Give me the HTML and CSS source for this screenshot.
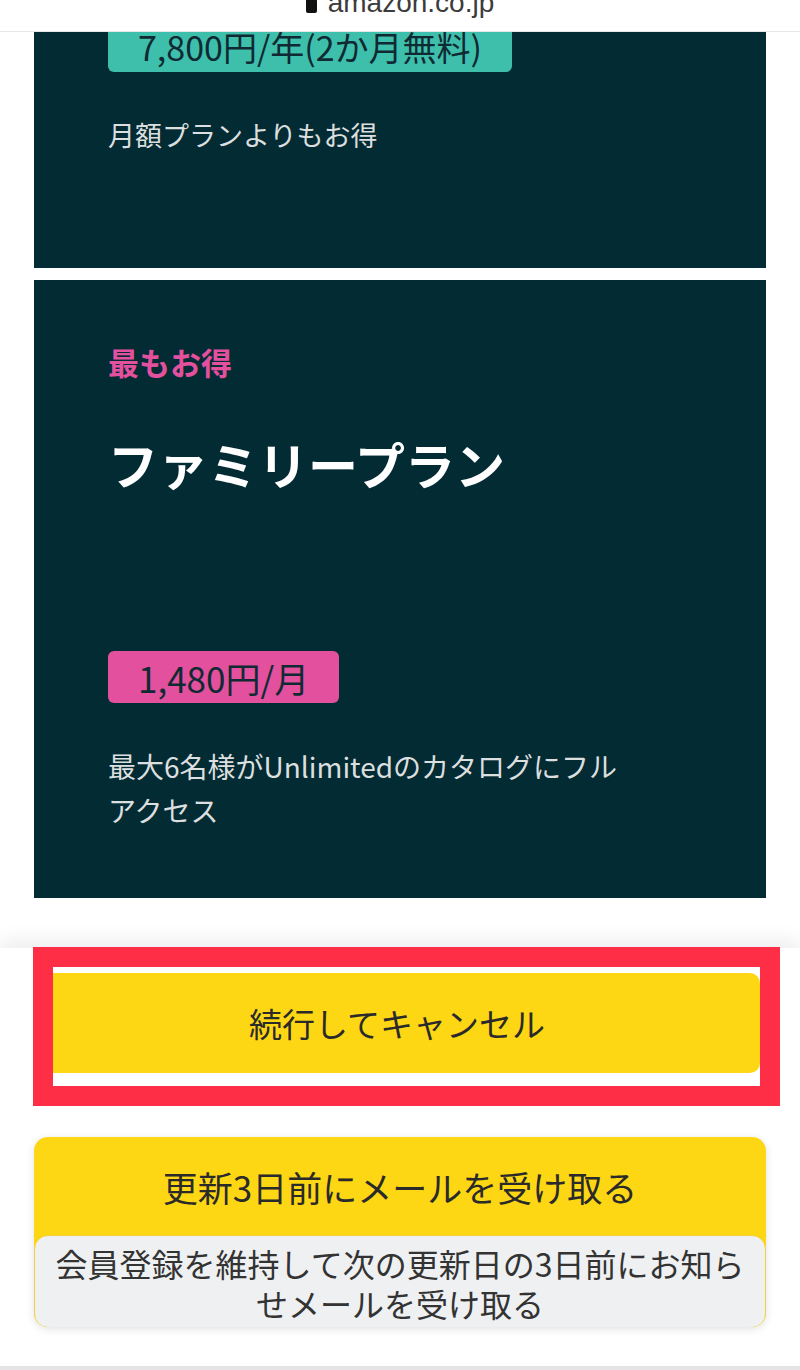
FILE: index.html
```html
<!DOCTYPE html>
<html>
<head>
    <title>Kindle Unlimited - プラン</title>
    <meta charset="UTF-8">
    <meta name="viewport" content="width=device-width, initial-scale=1.0">
    <link rel="stylesheet" href="styles.css">
</head>
<body>
    <header class="urlbar">
        <span class="url">
            <svg class="lock" width="11" height="14" viewBox="0 0 11 14"><rect x="0" y="0" width="11" height="14" rx="2" fill="#111"/></svg>
            amazon.co.jp
        </span>
    </header>

    <main class="plans">
        <section class="plan plan-annual">
            <span class="price price-teal">7,800円/年(2か月無料)</span>
            <p class="plan-note">月額プランよりもお得</p>
        </section>
        <section class="plan plan-family">
            <p class="plan-tag">最もお得</p>
            <h2 class="plan-name">ファミリープラン</h2>
            <span class="price price-pink">1,480円/月</span>
            <p class="plan-note plan-desc">最大6名様がUnlimitedのカタログにフルアクセス</p>
        </section>
    </main>

    <footer class="actions">
        <button class="btn-cancel">続行してキャンセル</button>
        <div class="highlight"></div>
        <button class="btn-remind">
            <span class="remind-title">更新3日前にメールを受け取る</span>
            <span class="remind-desc">会員登録を維持して次の更新日の3日前にお知らせメールを受け取る</span>
        </button>
    </footer>
</body>
</html>
```

FILE: styles.css
```css
body {
    margin: 0;
    background-color: white;
    font-family: "Noto Sans CJK JP", "Noto Sans", sans-serif;
    color: #222;
}
.urlbar {
    position: fixed;
    top: 0;
    left: 0;
    right: 0;
    height: 32px;
    background-color: white;
    border-bottom: 1px solid #e8e8e8;
    box-sizing: border-box;
    overflow: hidden;
    display: flex;
    justify-content: center;
    z-index: 10;
}
.url {
    display: flex;
    align-items: flex-start;
    gap: 11px;
    margin-top: -11px;
    font-family: "Liberation Sans", Arial, sans-serif;
    font-size: 28px;
    line-height: 28px;
    color: #3c3c3c;
}
.lock {
    margin-top: 10px;
}
.plans {
    padding: 0 34px;
}
.plan {
    display: flex;
    flex-direction: column;
    align-items: flex-start;
    background-color: #032b33;
    padding-left: 74px;
    padding-right: 74px;
}
.plan-annual {
    padding-top: 20px;
    padding-bottom: 111px;
}
.plan-family {
    margin-top: 12px;
    padding-top: 62px;
    padding-bottom: 66px;
}
.price {
    height: 52px;
    line-height: 54px;
    padding: 0 30px;
    border-radius: 6px;
    font-size: 35px;
    color: #0f2a32;
}
.price-teal {
    font-size: 34px;
    background-color: #3ebfac;
}
.price-pink {
    background-color: #e2509e;
    margin-top: 156px;
}
.plan-note {
    margin: 41px 0 0;
    font-size: 27px;
    line-height: 44px;
    color: #dcdfdf;
}
.plan-desc {
    font-size: 28px;
    max-width: 514px;
}
.plan-tag {
    margin: 0;
    font-size: 31px;
    line-height: 40px;
    font-weight: bold;
    color: #e2509e;
}
.plan-name {
    margin: 49px 0 0;
    font-size: 50px;
    line-height: 64px;
    font-weight: bold;
    color: white;
}
.actions {
    position: relative;
    margin-top: 50px;
    padding: 25px 0 39px;
    background-color: white;
    border-bottom: 4px solid #e4e4e4;
    box-shadow: 0 -8px 18px rgba(0,0,0,0.07);
}
.btn-cancel {
    display: block;
    width: 726px;
    height: 100px;
    margin: 0 40px 0 34px;
    border: none;
    border-radius: 10px;
    background-color: #fdd614;
    font-family: inherit;
    font-size: 33px;
    color: #2a2a2a;
}
.highlight {
    position: absolute;
    left: 33px;
    top: -1px;
    width: 747px;
    height: 159px;
    box-sizing: border-box;
    border: 20px solid #ff2e47;
    pointer-events: none;
}
.btn-remind {
    display: flex;
    flex-direction: column;
    width: 732px;
    height: 190px;
    margin: 64px 34px 0;
    padding: 0;
    border: none;
    border-radius: 14px;
    overflow: hidden;
    background-color: #fdd614;
    box-shadow: 0 2px 8px rgba(0,0,0,0.12);
    font-family: inherit;
    color: #2a2a2a;
}
.remind-title {
    height: 98px;
    line-height: 100px;
    width: 100%;
    font-size: 35px;
}
.remind-desc {
    flex: 1;
    width: 100%;
    box-sizing: border-box;
    padding: 7px 10px 4px;
    background-color: #eff0f2;
    border: 1.5px solid #f4cf3c;
    border-radius: 14px;
    font-size: 32px;
    line-height: 40px;
    color: #333;
}
```
